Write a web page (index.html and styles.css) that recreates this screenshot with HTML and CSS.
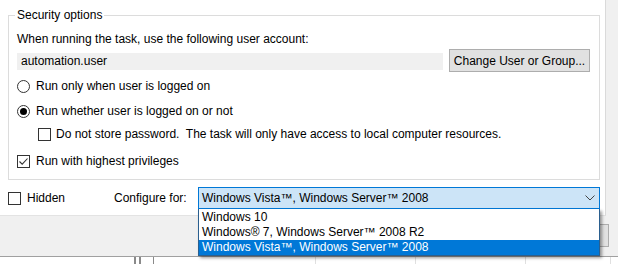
FILE: index.html
```html
<!DOCTYPE html>
<html lang="en">
<head>
    <meta charset="UTF-8">
    <meta name="viewport" content="width=device-width, initial-scale=1.0">
    <title>Task Properties</title>
    <link rel="stylesheet" href="styles.css">
</head>
<body>
    <div class="window">
        <div class="panel">
            <fieldset class="security">
                <legend>Security options</legend>
                <div class="text-line">When running the task, use the following user account:</div>
                <div class="account-row">
                    <div class="account-field">automation.user</div>
                    <button class="btn change-btn">Change User or Group...</button>
                </div>
                <div class="option opt-logged-on"><span class="radio"></span>Run only when user is logged on</div>
                <div class="option opt-whether"><span class="radio checked"></span>Run whether user is logged on or not</div>
                <div class="option opt-password"><span class="check"></span>Do not store password.&nbsp; The task will only have access to local computer resources.</div>
                <div class="option opt-highest">
                    <span class="check">
                        <svg width="11" height="11" viewBox="0 0 11 11"><polyline points="1.5,5.5 4.2,8.2 9.5,2.5" fill="none" stroke="#333" stroke-width="1.1"/></svg>
                    </span>Run with highest privileges
                </div>
            </fieldset>
            <div class="bottom-row">
                <div class="option hidden-opt"><span class="check"></span>Hidden</div>
                <div class="configure-label">Configure for:</div>
                <div class="combo">
                    <span>Windows Vista™, Windows Server™ 2008</span>
                    <svg width="10" height="6" viewBox="0 0 10 6"><polyline points="0.5,0.5 5,5 9.5,0.5" fill="none" stroke="#444" stroke-width="1"/></svg>
                    <ul class="combo-list">
                        <li>Windows 10</li>
                        <li>Windows® 7, Windows Server™ 2008 R2</li>
                        <li class="selected">Windows Vista™, Windows Server™ 2008</li>
                    </ul>
                </div>
            </div>
        </div>
        <div class="footer">
            <button class="btn footer-btn">OK</button>
            <button class="btn footer-btn">Cancel</button>
        </div>
        <div class="list-behind">
            <div class="col col-1"></div>
            <div class="col col-2"></div>
            <div class="col col-3"></div>
            <div class="col col-4"></div>
            <div class="col col-5"></div>
            <div class="col col-6"></div>
            <div class="col col-7"></div>
        </div>
    </div>
</body>
</html>
```

FILE: styles.css
```css
* {
    box-sizing: border-box;
}
body {
    margin: 0;
    background-color: #f0f0f0;
    font-family: "Liberation Sans", Arial, sans-serif;
    font-size: 12px;
    color: #000;
}
.window {
    width: 618px;
    height: 264px;
    display: flex;
    flex-direction: column;
    overflow: hidden;
}
.panel {
    width: 606px;
    height: 216px;
    background: #fff;
    border-right: 1px solid #dadada;
    border-bottom: 1px solid #e3e3e3;
    padding-top: 7px;
}
.security {
    margin: 0 5px 0 8px;
    padding: 0 9px 10px 8px;
    border: 1px solid #dcdcdc;
    min-width: 0;
}
.security legend {
    padding: 0 2px;
    margin-left: -2px;
    line-height: 16px;
}
.text-line {
    margin-top: 8px;
    line-height: 16px;
}
.account-row {
    display: flex;
    gap: 6px;
    height: 23px;
    margin-top: 2px;
}
.account-field {
    flex: 1;
    height: 17px;
    margin-top: 4px;
    padding-left: 4px;
    line-height: 17px;
    background: #f0f0f0;
}
.btn {
    font: inherit;
    color: #000;
    background: #e1e1e1;
    border: 1px solid #adadad;
    padding: 0;
    height: 23px;
}
.change-btn {
    width: 141px;
}
.option {
    display: flex;
    align-items: center;
    height: 16px;
    line-height: 16px;
    white-space: nowrap;
}
.opt-logged-on {
    margin-top: 6px;
}
.opt-whether {
    margin-top: 9px;
}
.opt-password {
    margin-top: 7px;
    padding-left: 21px;
}
.opt-password .check {
    margin-right: 5px;
}
.opt-highest {
    margin-top: 11px;
}
.radio,
.check {
    flex: none;
    width: 13px;
    height: 13px;
    border: 1px solid #333;
    background: #fff;
    margin-right: 6px;
    display: flex;
    align-items: center;
    justify-content: center;
}
.radio {
    border-radius: 50%;
}
.radio.checked::after {
    content: "";
    width: 7px;
    height: 7px;
    border-radius: 50%;
    background: #000;
}
.bottom-row {
    display: flex;
    align-items: center;
    height: 22px;
    margin-top: 7px;
    padding: 0 5px 0 8px;
}
.hidden-opt {
    width: 106px;
}
.configure-label {
    width: 84px;
}
.combo {
    position: relative;
    flex: 1;
    height: 22px;
    display: flex;
    align-items: center;
    justify-content: space-between;
    padding: 0 4px 0 3px;
    background: #cce4f7;
    border: 1px solid #0078d7;
}
.combo-list {
    position: absolute;
    top: calc(100% + 1px);
    left: -1px;
    right: -1px;
    margin: 0;
    padding: 1px 0 0;
    list-style: none;
    background: #fff;
    border: 1px solid #2a5f8f;
    border-top: none;
    box-shadow: 2px 2px 3px rgba(0,0,0,0.4);
}
.combo-list li {
    height: 15px;
    line-height: 15px;
    padding-left: 3px;
    white-space: nowrap;
}
.combo-list li.selected {
    background: #0078d7;
    color: #fff;
}
.footer {
    display: flex;
    justify-content: flex-end;
    gap: 6px;
    height: 40px;
    padding: 8px 9px 0 0;
}
.footer-btn {
    width: 75px;
}
.list-behind {
    flex: 1;
    display: flex;
    background: #fff;
    border-top: 1px solid #a0a0a0;
}
.col {
    border-right: 1px solid #e0e0e0;
}
.col-1 { width: 136px; border-right: 2px solid #8a8a8a; }
.col-2 { width: 5px; border-right: 2px solid #8a8a8a; }
.col-3 { width: 13px; border-right-color: #8a8a8a; }
.col-4 { width: 162px; }
.col-5 { width: 100px; }
.col-6 { width: 110px; }
.col-7 { width: 85px; }
```
